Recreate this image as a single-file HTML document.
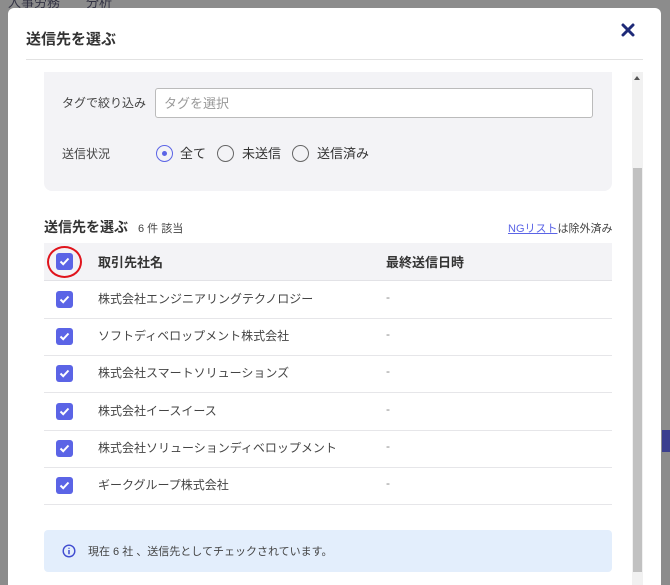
<!DOCTYPE html>
<html style="width:670px;height:585px;overflow:hidden"><head><meta charset="utf-8"><style>
*{box-sizing:border-box;margin:0;padding:0}
body{width:670px;height:585px;overflow:hidden;background:#8c8c8c;font-family:"Liberation Sans","Noto Sans CJK JP",sans-serif;position:relative;color:#333}
.a{position:absolute}
.modal{left:8px;top:8px;width:653px;height:577px;background:#fff;border-radius:6px 6px 0 0}
.cb{position:absolute;width:17px;height:17px;background:#5b64e6;border-radius:3px}
.cb svg{position:absolute;left:2px;top:2px}
.row{position:absolute;left:44px;width:568px;height:38px;border-bottom:1px solid #e6e6e9}
.row .t{position:absolute;left:54px;top:9px;font-size:12px;color:#444}
.row .d{position:absolute;left:342px;top:9px;font-size:12px;color:#888}
.rad{position:absolute;width:17px;height:17px;border:1.5px solid #666;border-radius:50%}
</style></head><body>
<div class="a" style="left:8px;top:-8px;font-size:13px;color:#334">人事労務　　分析</div>
<div class="a" style="left:662px;top:430px;width:10px;height:22px;background:#3b3f8f"></div>
<div class="a modal"></div>
<div class="a" style="left:26px;top:28px;font-size:15px;font-weight:bold;color:#333">送信先を選ぶ</div>
<svg class="a" style="left:621px;top:23px" width="14" height="14" viewBox="0 0 14 14"><path d="M2 2L12 12M12 2L2 12" stroke="#1e2a78" stroke-width="3" stroke-linecap="round"/></svg>
<div class="a" style="left:26px;top:59px;width:617px;height:1px;background:#e2e2e2"></div>
<div class="a" style="left:44px;top:72px;width:568px;height:119px;background:#f3f3f6;border-radius:0 0 8px 8px"></div>
<div class="a" style="left:62px;top:94px;font-size:12px;color:#444">タグで絞り込み</div>
<div class="a" style="left:155px;top:88px;width:438px;height:30px;background:#fff;border:1px solid #bbb;border-radius:3px"></div>
<div class="a" style="left:164px;top:93px;font-size:13px;color:#999">タグを選択</div>
<div class="a" style="left:62px;top:145px;font-size:12px;color:#444">送信状況</div>
<div class="rad" style="left:156px;top:145px;border-color:#5b64e6"><div style="position:absolute;left:4.5px;top:4.5px;width:5px;height:5px;border-radius:50%;background:#5b64e6"></div></div>
<div class="a" style="left:180px;top:143px;font-size:13px">全て</div>
<div class="rad" style="left:217px;top:145px"></div>
<div class="a" style="left:242px;top:143px;font-size:13px">未送信</div>
<div class="rad" style="left:292px;top:145px"></div>
<div class="a" style="left:317px;top:143px;font-size:13px">送信済み</div>
<div class="a" style="left:44px;top:217px;font-size:14px;font-weight:bold;color:#333">送信先を選ぶ</div>
<div class="a" style="left:138px;top:220px;font-size:11px;color:#444">6 件 該当</div>
<div class="a" style="left:508px;top:220px;font-size:11px;color:#444"><span style="color:#5b64e6;text-decoration:underline">NGリスト</span>は除外済み</div>
<div class="a" style="left:44px;top:243px;width:568px;height:38px;background:#f3f3f6;border-bottom:1px solid #e2e2e6"></div>
<div class="a" style="left:98px;top:252px;font-size:13px;font-weight:bold;color:#333">取引先社名</div>
<div class="a" style="left:386px;top:252px;font-size:13px;font-weight:bold;color:#333">最終送信日時</div>
<div class="cb" style="left:56px;top:253px"><svg width="13" height="13" viewBox="0 0 13 13"><path d="M2.5 6.5L5.2 9.2L10.5 3.5" stroke="#fff" stroke-width="2" fill="none"/></svg></div>
<div class="a" style="left:47px;top:246px;width:35px;height:32px;border:2.5px solid #e0141c;border-radius:50%"></div>
<div class="row" style="top:281px"><div class="cb" style="left:12px;top:10px"><svg width="13" height="13" viewBox="0 0 13 13"><path d="M2.5 6.5L5.2 9.2L10.5 3.5" stroke="#fff" stroke-width="2" fill="none"/></svg></div><div class="t">株式会社エンジニアリングテクノロジー</div><div class="d">-</div></div>
<div class="row" style="top:318px"><div class="cb" style="left:12px;top:10px"><svg width="13" height="13" viewBox="0 0 13 13"><path d="M2.5 6.5L5.2 9.2L10.5 3.5" stroke="#fff" stroke-width="2" fill="none"/></svg></div><div class="t">ソフトディベロップメント株式会社</div><div class="d">-</div></div>
<div class="row" style="top:355px"><div class="cb" style="left:12px;top:10px"><svg width="13" height="13" viewBox="0 0 13 13"><path d="M2.5 6.5L5.2 9.2L10.5 3.5" stroke="#fff" stroke-width="2" fill="none"/></svg></div><div class="t">株式会社スマートソリューションズ</div><div class="d">-</div></div>
<div class="row" style="top:393px"><div class="cb" style="left:12px;top:10px"><svg width="13" height="13" viewBox="0 0 13 13"><path d="M2.5 6.5L5.2 9.2L10.5 3.5" stroke="#fff" stroke-width="2" fill="none"/></svg></div><div class="t">株式会社イースイース</div><div class="d">-</div></div>
<div class="row" style="top:430px"><div class="cb" style="left:12px;top:10px"><svg width="13" height="13" viewBox="0 0 13 13"><path d="M2.5 6.5L5.2 9.2L10.5 3.5" stroke="#fff" stroke-width="2" fill="none"/></svg></div><div class="t">株式会社ソリューションディベロップメント</div><div class="d">-</div></div>
<div class="row" style="top:467px"><div class="cb" style="left:12px;top:10px"><svg width="13" height="13" viewBox="0 0 13 13"><path d="M2.5 6.5L5.2 9.2L10.5 3.5" stroke="#fff" stroke-width="2" fill="none"/></svg></div><div class="t">ギークグループ株式会社</div><div class="d">-</div></div>
<div class="a" style="left:44px;top:530px;width:568px;height:42px;background:#e3eefc;border-radius:4px"></div>
<svg class="a" style="left:62px;top:544px" width="14" height="14" viewBox="0 0 14 14"><circle cx="7" cy="7" r="5.8" fill="none" stroke="#3f4bd0" stroke-width="1.4"/><path d="M7 6v4.2M7 3.8v1" stroke="#3f4bd0" stroke-width="1.5"/></svg>
<div class="a" style="left:88px;top:543px;font-size:11px;color:#444">現在 6 社 、送信先としてチェックされています。</div>
<div class="a" style="left:632px;top:72px;width:11px;height:513px;background:#f1f1f1"></div>
<div class="a" style="left:634px;top:76px;width:0;height:0;border-left:3px solid transparent;border-right:3px solid transparent;border-bottom:4px solid #555"></div>
<div class="a" style="left:633px;top:168px;width:9px;height:404px;background:#c1c1c1"></div>
</body></html>
